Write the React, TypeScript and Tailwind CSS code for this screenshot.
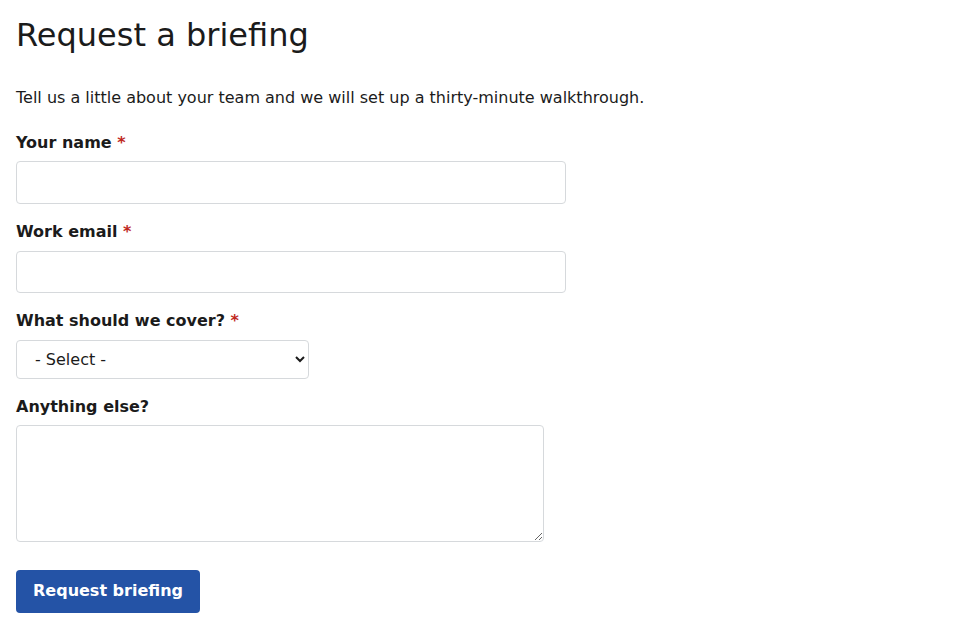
export default function App() {
  return (
    <main className="px-4 pt-[16px] text-[#1b1b1b] font-['DejaVu_Sans',sans-serif]">
      <h1 className="text-[32px] leading-[1.2] font-normal">Request a briefing</h1>

      <p className="mt-[32px] text-base leading-6">
        Tell us a little about your team and we will set up a thirty-minute walkthrough.
      </p>

      <form className="mt-[21px]" onSubmit={(e) => e.preventDefault()}>
        <Label text="Your name" required />
        <input
          type="text"
          className="mt-[6px] block h-[43px] w-[550px] rounded-[4px] border border-[#d6d9dc] bg-white px-3 text-base"
        />

        <Label text="Work email" required className="mt-[16px]" />
        <input
          type="email"
          className="mt-[7px] block h-[42px] w-[550px] rounded-[4px] border border-[#d6d9dc] bg-white px-3 text-base"
        />

        <Label text="What should we cover?" required className="mt-[16px]" />
        <select className="mt-[7px] block h-[39px] w-[293px] rounded-[4px] border border-[#d6d9dc] bg-white pl-[14px] pr-2 text-base">
          <option>- Select -</option>
          <option>Product overview</option>
          <option>Integrations</option>
          <option>Pricing</option>
        </select>

        <Label text="Anything else?" className="mt-[16px]" />
        <textarea className="mt-[6px] block h-[117px] w-[528px] rounded-[4px] border border-[#d6d9dc] bg-white px-3 py-2 text-base" />

        <button
          type="submit"
          className="mt-[28px] h-[43px] w-[184px] rounded-[4px] bg-[#2453a6] pb-[2px] text-base font-bold text-white"
        >
          Request briefing
        </button>
      </form>
    </main>
  );
}

function Label({ text, required, className = '' }: { text: string; required?: boolean; className?: string }) {
  return (
    <label className={`block text-base font-bold leading-6 ${className}`}>
      {text}
      {required && <span className="text-[#c0281e]"> *</span>}
    </label>
  );
}
